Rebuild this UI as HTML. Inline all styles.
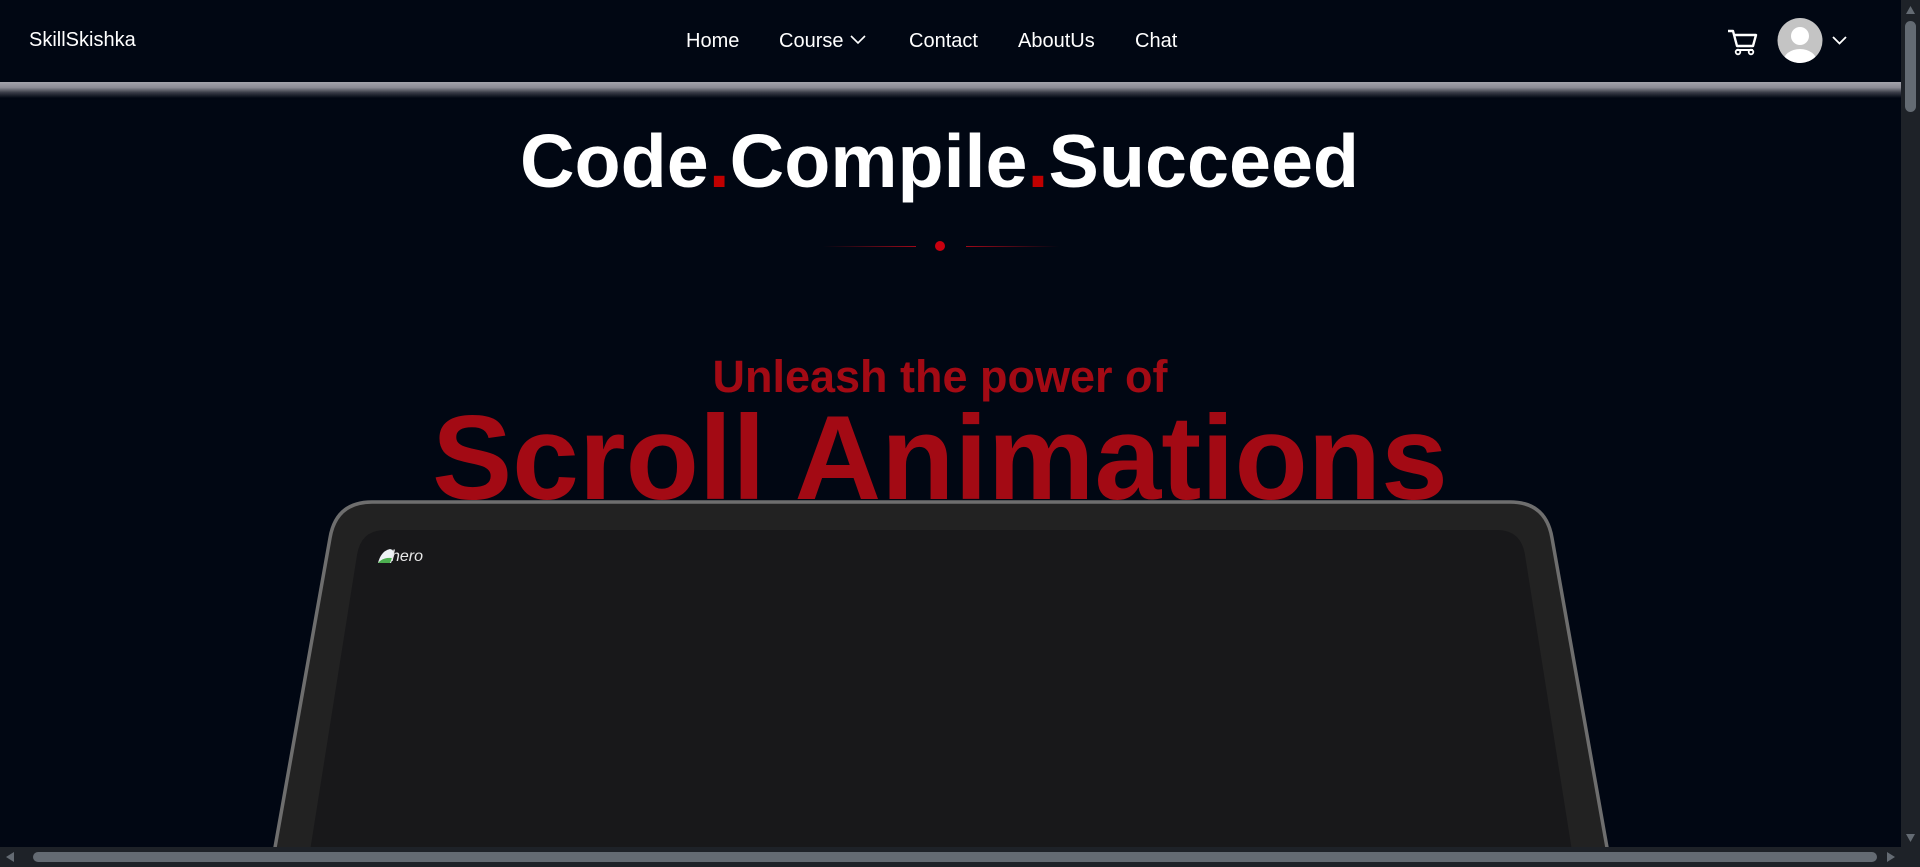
<!DOCTYPE html>
<html><head><meta charset="utf-8"><style>
html,body{margin:0;padding:0;width:1920px;height:867px;overflow:hidden;background:#010713;font-family:"Liberation Sans",sans-serif;}
.abs{position:absolute}
.nav a{position:absolute;top:30px;color:#fff;font-size:20px;text-decoration:none;white-space:nowrap}
</style></head><body>
<div class="abs" style="left:0;top:0;width:1901px;height:82px;background:#010713"></div>
<div class="abs" style="left:0;top:82px;width:1901px;height:16px;background:linear-gradient(#a4a4ac 0%,#8a8a94 35%,#3a3d48 65%,#010713 100%)"></div>
<div class="abs" style="left:29px;top:29px;color:#fff;font-size:20px">SkillSkishka</div>
<div class="nav">
<a style="left:686px">Home</a>
<a style="left:779px">Course <svg width="18" height="12" viewBox="0 0 18 12" style="vertical-align:2px"><path d="M2 3l7 7 7-7" fill="none" stroke="#fff" stroke-width="1.6"/></svg></a>
<a style="left:909px">Contact</a>
<a style="left:1018px">AboutUs</a>
<a style="left:1135px">Chat</a>
</div>
<svg class="abs" style="left:1726px;top:28px" width="32" height="28" viewBox="0 0 32 28"><path d="M2 3h5l4 15h16l3-11H9" fill="none" stroke="#fff" stroke-width="2.4" stroke-linejoin="round"/><path d="M11 22h16" stroke="#fff" stroke-width="2"/><circle cx="12" cy="24" r="2.3" fill="none" stroke="#fff" stroke-width="1.8"/><circle cx="25" cy="24" r="2.3" fill="none" stroke="#fff" stroke-width="1.8"/></svg>
<svg class="abs" style="left:1777px;top:18px" width="46" height="45" viewBox="0 0 46 45"><defs><clipPath id="c"><circle cx="23" cy="22.5" r="22.5"/></clipPath></defs><circle cx="23" cy="22.5" r="22.5" fill="#c4c4c4"/><g clip-path="url(#c)" fill="#fff"><circle cx="23" cy="18" r="9"/><ellipse cx="23" cy="44" rx="17" ry="13"/></g></svg>
<svg class="abs" style="left:1831px;top:34px" width="17" height="12" viewBox="0 0 17 12"><path d="M2 3l6.5 6.5L15 3" fill="none" stroke="#fff" stroke-width="1.8"/></svg>

<div class="abs" style="left:0;width:1901px;top:116px;text-align:center;color:#fff;font-weight:bold;font-size:75.5px;line-height:90px"><span style="position:relative;left:-11px">Code<span style="color:#c00000">.</span>Compile<span style="color:#c00000">.</span>Succeed</span></div>
<div class="abs" style="left:823px;top:246px;width:93px;height:1px;background:linear-gradient(90deg,transparent,#a00818)"></div>
<div class="abs" style="left:966px;top:246px;width:93px;height:1px;background:linear-gradient(90deg,#a00818,transparent)"></div>
<div class="abs" style="left:935px;top:241px;width:10px;height:10px;border-radius:50%;background:#c8000f"></div>

<div class="abs" style="left:0;width:1880px;top:350px;text-align:center;color:#a30a14;font-weight:bold;font-size:45px;line-height:54px">Unleash the power of</div>
<div class="abs" style="left:0;width:1880px;top:398px;text-align:center;color:#a30a14;font-weight:bold;font-size:120px;line-height:120px">Scroll Animations</div>

<svg class="abs" style="left:0;top:0" width="1901" height="867" viewBox="0 0 1901 867">
<path d="M271 870 L330 538 Q336 502 372 502 L1510 502 Q1546 502 1552 538 L1611 870 Z" fill="#222222" stroke="#6e6e6e" stroke-width="3.5"/>
<path d="M307 870 L357 555 Q361 530 385 530 L1497 530 Q1521 530 1525 555 L1575 870 Z" fill="#18181a"/>
</svg>
<svg class="abs" style="left:377px;top:547px" width="20" height="18" viewBox="0 0 20 18"><path d="M1 16 Q4 4 13 2 Q18 3 17 9 L14 16 Z" fill="#eef2f5"/><path d="M1 16 Q6 10 15 11 L13 16 Z" fill="#4caf50"/></svg>
<div class="abs" style="left:391px;top:548px;color:#e8e8e8;font-size:16px;font-style:italic">hero</div>

<div class="abs" style="left:1901px;top:0;width:19px;height:867px;background:#1e2228"></div>
<div class="abs" style="left:1905px;top:21px;width:11px;height:91px;border-radius:6px;background:#646b73"></div>
<svg class="abs" style="left:1901px;top:0" width="19" height="20"><path d="M5 14h9l-4.5-8z" fill="#646b73"/></svg>
<svg class="abs" style="left:1901px;top:828px" width="19" height="20"><path d="M5 6h9l-4.5 8z" fill="#646b73"/></svg>
<div class="abs" style="left:0;top:847px;width:1920px;height:20px;background:#1e2228"></div>
<div class="abs" style="left:33px;top:852px;width:1844px;height:10px;border-radius:5px;background:#646b73"></div>
<svg class="abs" style="left:0;top:847px" width="20" height="20"><path d="M14 5v10l-8-5z" fill="#646b73"/></svg>
<svg class="abs" style="left:1881px;top:847px" width="20" height="20"><path d="M6 5v10l8-5z" fill="#646b73"/></svg>
</body></html>
